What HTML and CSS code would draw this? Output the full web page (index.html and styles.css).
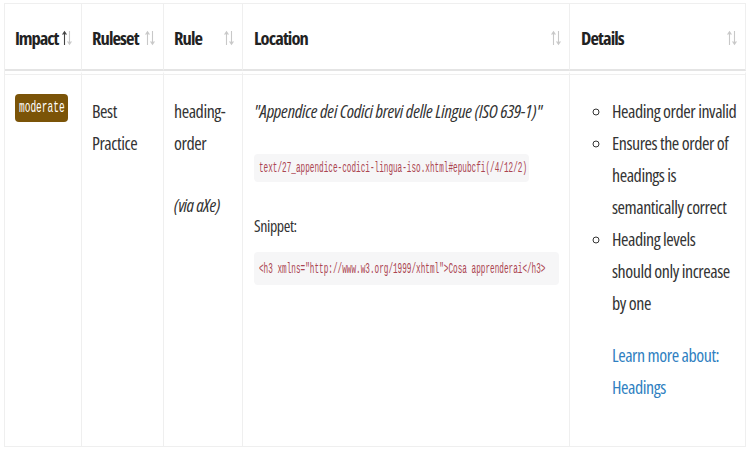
FILE: index.html
```html
<!DOCTYPE html>
<html lang="it">
<head>
<meta charset="utf-8">
<title>Risultati</title>
<link rel="stylesheet" href="styles.css">
</head>
<body>
<table class="results">
  <thead>
    <tr>
      <th class="c-impact"><div class="hd"><span>Impact</span><svg class="sort" viewBox="0 0 10 16" width="10" height="16"><g class="up on"><path d="M2.5 2v13M0.6 4.6L2.5 1.8L4.4 4.6"/></g><g class="dn"><path d="M7.5 1v13M5.6 11.4L7.5 14.2L9.4 11.4"/></g></svg></div></th>
      <th class="c-ruleset"><div class="hd"><span>Ruleset</span><svg class="sort" viewBox="0 0 10 16" width="10" height="16"><g class="up"><path d="M2.5 2v13M0.6 4.6L2.5 1.8L4.4 4.6"/></g><g class="dn"><path d="M7.5 1v13M5.6 11.4L7.5 14.2L9.4 11.4"/></g></svg></div></th>
      <th class="c-rule"><div class="hd"><span>Rule</span><svg class="sort" viewBox="0 0 10 16" width="10" height="16"><g class="up"><path d="M2.5 2v13M0.6 4.6L2.5 1.8L4.4 4.6"/></g><g class="dn"><path d="M7.5 1v13M5.6 11.4L7.5 14.2L9.4 11.4"/></g></svg></div></th>
      <th class="c-location"><div class="hd"><span>Location</span><svg class="sort" viewBox="0 0 10 16" width="10" height="16"><g class="up"><path d="M2.5 2v13M0.6 4.6L2.5 1.8L4.4 4.6"/></g><g class="dn"><path d="M7.5 1v13M5.6 11.4L7.5 14.2L9.4 11.4"/></g></svg></div></th>
      <th class="c-details"><div class="hd"><span>Details</span><svg class="sort" viewBox="0 0 10 16" width="10" height="16"><g class="up"><path d="M2.5 2v13M0.6 4.6L2.5 1.8L4.4 4.6"/></g><g class="dn"><path d="M7.5 1v13M5.6 11.4L7.5 14.2L9.4 11.4"/></g></svg></div></th>
    </tr>
  </thead>
  <tbody>
    <tr>
      <td class="c-impact"><span class="badge"><span class="mono-sq">moderate</span></span></td>
      <td class="c-ruleset">Best Practice</td>
      <td class="c-rule">heading-order<p class="via">(via aXe)</p></td>
      <td class="c-location">
        <p class="quote">"Appendice dei Codici brevi delle Lingue (ISO 639-1)"</p>
        <code class="code code-loc"><span class="code-sq">text/27_appendice-codici-lingua-iso.xhtml#epubcfi(/4/12/2)</span></code>
        <p class="snip-label">Snippet:</p>
        <pre class="code code-snip"><span class="code-sq">&lt;h3 xmlns="http://www.w3.org/1999/xhtml"&gt;Cosa apprenderai&lt;/h3&gt;</span></pre>
      </td>
      <td class="c-details">
        <ul class="desc">
          <li>Heading order invalid</li>
          <li>Ensures the order of headings is semantically correct</li>
          <li>Heading levels<br>should only increase by one</li>
        </ul>
        <p class="learn"><a href="#">Learn more about: Headings</a></p>
      </td>
    </tr>
  </tbody>
</table>
</body>
</html>
```
FILE: styles.css
```css
html, body { background: #fff; }
body {
  margin: 3px 4px;
  font-family: "Open Sans", "Noto Sans", sans-serif;
  font-stretch: 75%;
  color: #333;
}
.results {
  width: 742px;
  box-sizing: border-box;
  table-layout: fixed;
  border-collapse: separate;
  border-spacing: 0;
  border-top: 1px solid #efefef;
  border-left: 1px solid #efefef;
}
.results th, .results td {
  box-sizing: border-box;
  border-right: 1px solid #efefef;
  border-bottom: 1px solid #efefef;
}
.c-impact { width: 77px; }
.c-ruleset { width: 82px; }
.c-rule { width: 79px; }
.c-location { width: 327px; }
.c-details { width: 176px; }

.results th {
  height: 67px;
  padding: 0 8px 0 10px;
  text-align: left;
  vertical-align: middle;
  font-size: 18.5px;
  letter-spacing: -0.9px;
  font-weight: 700;
  color: #222;
  border-bottom: 2px solid #e4e4e4;
}
.results th.c-location, .results th.c-details { padding-left: 11px; }
.results th.c-impact { padding-right: 9px; letter-spacing: -1.1px; }
.hd {
  display: flex;
  justify-content: space-between;
  align-items: center;
  padding-top: 2px;
}
.sort { display: block; flex: none; }
.sort path { fill: none; stroke: #c8c8c8; stroke-width: 1.1; }
.sort .on path { stroke: #444; }

.results td {
  height: 376px;
  vertical-align: top;
  padding: 21px 10px 0 10px;
  font-size: 18px;
  letter-spacing: -0.45px;
  line-height: 32px;
  border-top: 3px solid #fff;
  box-shadow: inset 0 1px 0 #efefef;
}
.results td.c-location { padding-left: 11px; padding-right: 6px; }
.results td.c-details { padding-right: 6px; }

.badge {
  display: flex;
  justify-content: center;
  align-items: center;
  width: 53px;
  height: 28px;
  margin-top: -1px;
  border-radius: 4px;
  background: #7b5408;
  color: #fff;
  letter-spacing: 0;
}
.mono-sq {
  display: inline-block;
  flex: none;
  font-family: "Liberation Mono", "DejaVu Sans Mono", monospace;
  font-size: 17px;
  line-height: 20px;
  font-weight: 400;
  transform: scaleX(0.56);
  transform-origin: 50% 50%;
}

.via { margin: 30px 0 0; font-style: italic; }

.quote { margin: 0; font-style: italic; color: #333; white-space: nowrap; letter-spacing: -0.2px; }
.code {
  display: flex;
  align-items: center;
  box-sizing: border-box;
  margin: 0;
  padding: 0 5px;
  border-radius: 4px;
  background: #f6f6f7;
  color: #ab4450;
  white-space: pre;
  letter-spacing: 0;
}
.code-loc { width: 275px; height: 28px; margin-top: 27px; }
.code-snip { width: 305px; height: 33px; margin-top: 14px; }
.code-sq {
  display: inline-block;
  flex: none;
  font-family: "Liberation Mono", "DejaVu Sans Mono", monospace;
  font-size: 14px;
  line-height: 18px;
  transform: scaleX(0.55);
  transform-origin: 0 50%;
}
.snip-label {
  margin: 32px 0 0;
  font-size: 16px;
  letter-spacing: -0.4px;
  line-height: 24px;
  color: #333;
}

.desc {
  margin: 0;
  padding: 0 0 0 32px;
  list-style: circle;
}
.learn { margin: 20px 0 0 32px; }
.learn a { color: #2f7fc1; text-decoration: none; }
```
